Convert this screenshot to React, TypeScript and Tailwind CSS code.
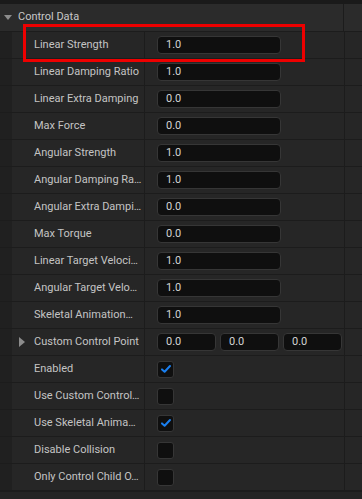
import React from "react";

type Row =
  | { label: string; kind: "num"; value: string }
  | { label: string; kind: "vec"; values: string[] }
  | { label: string; kind: "check"; checked: boolean };

const rows: Row[] = [
  { label: "Linear Strength", kind: "num", value: "1.0" },
  { label: "Linear Damping Ratio", kind: "num", value: "1.0" },
  { label: "Linear Extra Damping", kind: "num", value: "0.0" },
  { label: "Max Force", kind: "num", value: "0.0" },
  { label: "Angular Strength", kind: "num", value: "1.0" },
  { label: "Angular Damping Ra…", kind: "num", value: "1.0" },
  { label: "Angular Extra Dampi…", kind: "num", value: "0.0" },
  { label: "Max Torque", kind: "num", value: "0.0" },
  { label: "Linear Target Veloci…", kind: "num", value: "1.0" },
  { label: "Angular Target Velo…", kind: "num", value: "1.0" },
  { label: "Skeletal Animation…", kind: "num", value: "1.0" },
  { label: "Custom Control Point", kind: "vec", values: ["0.0", "0.0", "0.0"] },
  { label: "Enabled", kind: "check", checked: true },
  { label: "Use Custom Control…", kind: "check", checked: false },
  { label: "Use Skeletal Anima…", kind: "check", checked: true },
  { label: "Disable Collision", kind: "check", checked: false },
  { label: "Only Control Child O…", kind: "check", checked: false },
];

function NumBox({ value, w }: { value: string; w: string }) {
  return (
    <div
      className={`${w} h-[18px] rounded-[4px] bg-[#0f0f0f] border border-[#363636] flex items-center pl-[8px] text-[11px] text-[#d4d4d4]`}
    >
      {value}
    </div>
  );
}

function Check({ checked }: { checked: boolean }) {
  return (
    <div className="w-[17px] h-[17px] rounded-[3px] bg-[#0f0f0f] border border-[#363636] flex items-center justify-center">
      {checked && (
        <svg width="12" height="12" viewBox="0 0 12 12">
          <path
            d="M2 6.4 L4.6 8.8 L10 3"
            fill="none"
            stroke="#1a7fef"
            strokeWidth="2"
            strokeLinecap="round"
            strokeLinejoin="round"
          />
        </svg>
      )}
    </div>
  );
}

export default function App() {
  return (
    <div
      className="relative w-[362px] h-[499px] overflow-hidden bg-[#242424] select-none"
      style={{ fontFamily: "Roboto, 'Noto Sans', sans-serif" }}
    >
      <div className="h-[4px] bg-[#1a1a1a]" />
      {/* Header */}
      <div className="flex h-[28px] bg-[#2b2b2b] border-b border-[#1c1c1c]">
        <div className="w-[344px] border-r border-[#1c1c1c] flex items-center">
          <svg width="8" height="6" viewBox="0 0 8 6" className="ml-[4px] mr-[6px]">
            <path d="M0 0 L8 0 L4 5 Z" fill="#8c8c8c" />
          </svg>
          <span className="text-[11px] text-[#c8c8c8]">Control Data</span>
        </div>
        <div className="flex-1" />
      </div>
      {/* Rows */}
      {rows.map((r, i) => (
        <div key={i} className="flex h-[27px] border-b border-[#1c1c1c]">
          <div className="w-[12px] bg-[#202020]" />
          <div className="w-[133px] bg-[#262626] border-r border-[#1c1c1c] flex items-center relative">
            {r.kind === "vec" && (
              <svg width="7" height="10" viewBox="0 0 7 10" className="absolute left-[7px] top-[8px]">
                <path d="M0 0 L6 5 L0 10 Z" fill="#8c8c8c" />
              </svg>
            )}
            <span className="pl-[22px] pr-[1px] text-[11px] text-[#c4c4c4] whitespace-nowrap overflow-hidden">
              {r.label}
            </span>
          </div>
          <div className="w-[200px] bg-[#262626] border-r border-[#1c1c1c] flex items-center pl-[12px]">
            {r.kind === "num" && <NumBox value={r.value} w="w-[124px]" />}
            {r.kind === "vec" && (
              <div className="flex gap-[4px]">
                {r.values.map((v, j) => (
                  <NumBox key={j} value={v} w="w-[59px]" />
                ))}
              </div>
            )}
            {r.kind === "check" && <Check checked={r.checked} />}
          </div>
          <div className="flex-1 bg-[#262626]" />
        </div>
      ))}
      <div className="h-[1px] bg-[#1c1c1c]" />
      {/* highlight box */}
      <div className="absolute left-[23px] top-[24px] w-[282px] h-[38px] border-[3px] border-[#ee0000]" />
    </div>
  );
}
